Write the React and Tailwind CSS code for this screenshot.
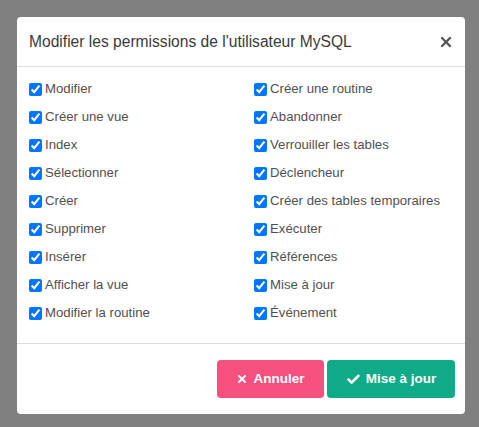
import { Check, X } from 'lucide-react';

const left = [
  'Modifier',
  'Créer une vue',
  'Index',
  'Sélectionner',
  'Créer',
  'Supprimer',
  'Insérer',
  'Afficher la vue',
  'Modifier la routine',
];

const right = [
  'Créer une routine',
  'Abandonner',
  'Verrouiller les tables',
  'Déclencheur',
  'Créer des tables temporaires',
  'Exécuter',
  'Références',
  'Mise à jour',
  'Événement',
];

function Perm({ label }) {
  return (
    <label className="flex items-center h-[28px] gap-[3px] text-[13.2px] text-[#505050]">
      <input type="checkbox" defaultChecked className="w-[13px] h-[13px] m-0 accent-[#0075ff]" />
      <span>{label}</span>
    </label>
  );
}

export default function App() {
  return (
    <div className="w-[479px] h-[427px] bg-[#808080] pt-[17px] pl-[17px]" style={{ fontFamily: '"Liberation Sans", Arial, sans-serif' }}>
      <div className="w-[448px] h-[397px] bg-white rounded-[4px] flex flex-col">
        <div className="h-[50px] flex items-center justify-between pl-[12px] pr-[11px] border-b border-[#dedede]">
          <h2 className="text-[15.6px] text-[#3a3a3a]">Modifier les permissions de l'utilisateur MySQL</h2>
          <X className="w-[16px] h-[16px] text-[#555]" strokeWidth={3.5} />
        </div>

        <div className="grid grid-cols-2 pl-[12px] pt-[8px] pb-[16px] border-b border-[#dedede]">
          <div className="flex flex-col">
            {left.map((l) => (
              <Perm key={l} label={l} />
            ))}
          </div>
          <div className="flex flex-col pl-[7px]">
            {right.map((l) => (
              <Perm key={l} label={l} />
            ))}
          </div>
        </div>

        <div className="flex justify-end gap-[3px] pt-[16px] pr-[10px]">
          <button className="w-[107px] h-[38px] rounded-[4px] bg-[#f6507f] text-white text-[13.5px] font-bold flex items-center justify-center gap-[5px]">
            <X className="w-[12px] h-[12px]" strokeWidth={4} />
            Annuler
          </button>
          <button className="w-[128px] h-[38px] rounded-[4px] bg-[#0faa87] text-white text-[13.5px] font-bold flex items-center justify-center gap-[5px]">
            <Check className="w-[15px] h-[15px]" strokeWidth={4} />
            Mise à jour
          </button>
        </div>
      </div>
    </div>
  );
}
